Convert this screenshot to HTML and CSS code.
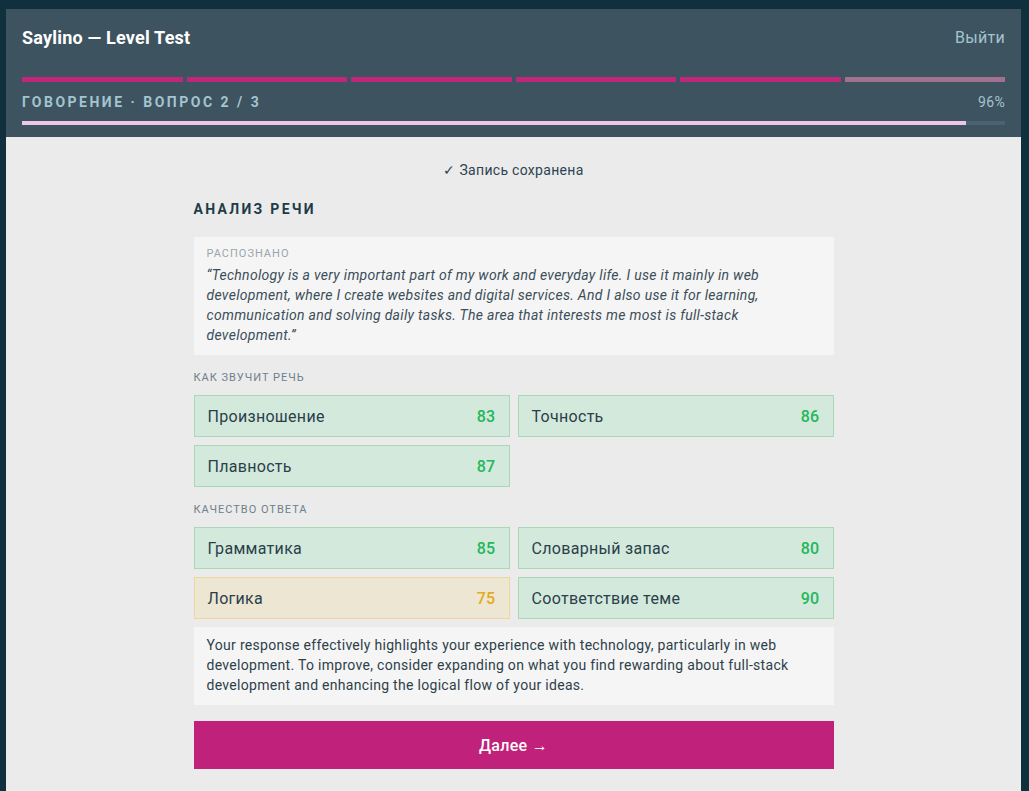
FILE: index.html
```html
<!DOCTYPE html>
<html lang="ru">
<head>
    <meta charset="UTF-8">
    <meta name="viewport" content="width=device-width, initial-scale=1.0">
    <title>Saylino — Level Test</title>
    <link rel="stylesheet" href="styles.css">
</head>
<body>
    <div class="app">
        <header class="topbar">
            <div class="title-row">
                <div class="brand">Saylino — Level Test</div>
                <a class="exit" href="#">Выйти</a>
            </div>

            <div class="segments">
                <span class="seg done"></span>
                <span class="seg done"></span>
                <span class="seg done"></span>
                <span class="seg done"></span>
                <span class="seg done"></span>
                <span class="seg current"></span>
            </div>

            <div class="step-row">
                <span class="step">Говорение · Вопрос 2 / 3</span>
                <span class="percent">96%</span>
            </div>

            <div class="progress">
                <div class="progress-fill" style="width: 96%"></div>
            </div>
        </header>

        <main class="content">
            <div class="saved">✓ Запись сохранена</div>

            <div class="column">
                <h2 class="heading">Анализ речи</h2>

                <div class="transcript">
                    <div class="caption">Распознано</div>
                    <p class="quote">“Technology is a very important part of my work and everyday life. I use it mainly in web development, where I create websites and digital services. And I also use it for learning, communication and solving daily tasks. The area that interests me most is full-stack development.”</p>
                </div>

                <div class="group-label">Как звучит речь</div>
                <div class="scores">
                    <div class="score good"><span>Произношение</span><b>83</b></div>
                    <div class="score good"><span>Точность</span><b>86</b></div>
                    <div class="score good"><span>Плавность</span><b>87</b></div>
                </div>

                <div class="group-label">Качество ответа</div>
                <div class="scores">
                    <div class="score good"><span>Грамматика</span><b>85</b></div>
                    <div class="score good"><span>Словарный запас</span><b>80</b></div>
                    <div class="score fair"><span>Логика</span><b>75</b></div>
                    <div class="score good"><span>Соответствие теме</span><b>90</b></div>
                </div>

                <div class="feedback">Your response effectively highlights your experience with technology, particularly in web development. To improve, consider expanding on what you find rewarding about full-stack development and enhancing the logical flow of your ideas.</div>

                <button class="next-button">Далее →</button>
            </div>
        </main>
    </div>
</body>
</html>
```

FILE: styles.css
```css
body {
    margin: 0;
    font-family: Roboto, 'Noto Sans', sans-serif;
    background: #10303e;
    min-height: 100vh;
}

.app {
    margin: 9px 8px 0 6px;
    background: #ebebeb;
    min-height: calc(100vh - 9px);
}

/* header */

.topbar {
    background: #3e5360;
    padding: 18px 16px 12px;
}

.title-row {
    display: flex;
    justify-content: space-between;
    align-items: center;
    height: 20px;
}

.brand {
    color: #ffffff;
    font-size: 18px;
    font-weight: 700;
    letter-spacing: 0.2px;
}

.exit {
    color: #a4c4cf;
    font-size: 16px;
    letter-spacing: 0.3px;
    text-decoration: none;
}

.segments {
    display: flex;
    gap: 4px;
    margin-top: 30px;
}

.seg {
    flex: 1;
    height: 5px;
    background: #c0267a;
}

.seg.current {
    background: #a07290;
}

.step-row {
    display: flex;
    justify-content: space-between;
    align-items: center;
    margin-top: 10px;
    height: 20px;
}

.step {
    color: #a4c4cf;
    font-size: 14px;
    font-weight: 700;
    letter-spacing: 2.5px;
    text-transform: uppercase;
}

.percent {
    color: #a4c4cf;
    font-size: 14px;
    letter-spacing: 0.3px;
}

.progress {
    margin-top: 9px;
    height: 4px;
    background: #4d6270;
}

.progress-fill {
    height: 100%;
    background: #eec6e6;
}

/* content */

.content {
    padding: 23px 0 22px;
}

.saved {
    text-align: center;
    color: #2e4452;
    font-size: 14px;
    line-height: 20px;
    letter-spacing: 0.3px;
}

.column {
    width: 640px;
    margin: 0 auto;
}

.heading {
    margin: 19px 0 0;
    font-size: 14px;
    line-height: 20px;
    font-weight: 700;
    letter-spacing: 2.3px;
    text-transform: uppercase;
    color: #1f3a48;
}

.transcript {
    margin-top: 18px;
    background: #f5f5f5;
    padding: 10px 13px;
}

.caption {
    font-size: 11px;
    line-height: 14px;
    letter-spacing: 1px;
    text-transform: uppercase;
    color: #9aa6ad;
    margin-bottom: 4px;
}

.quote {
    margin: 0;
    font-size: 14px;
    line-height: 20px;
    font-style: italic;
    letter-spacing: 0.3px;
    color: #3b4e59;
}

.group-label {
    margin-top: 16px;
    font-size: 11px;
    line-height: 14px;
    letter-spacing: 1px;
    text-transform: uppercase;
    color: #6d808b;
}

.scores {
    display: grid;
    grid-template-columns: 1fr 1fr;
    gap: 8px;
    margin-top: 10px;
}

.score {
    display: flex;
    justify-content: space-between;
    align-items: center;
    height: 42px;
    box-sizing: border-box;
    padding: 0 13px;
    font-size: 16px;
    letter-spacing: 0.3px;
    color: #2a3f4a;
}

.score b {
    font-weight: 500;
}

.score.good {
    background: #d3e9dc;
    border: 1px solid #a9d8b7;
}

.score.good b {
    color: #24b75b;
}

.score.fair {
    background: #ede6d3;
    border: 1px solid #f1d69c;
}

.score.fair b {
    color: #e3ab22;
}

.feedback {
    margin-top: 8px;
    background: #f5f5f5;
    padding: 8px 13px 10px;
    font-size: 14px;
    line-height: 20px;
    letter-spacing: 0.3px;
    color: #2e3f4a;
}

.next-button {
    display: block;
    width: 100%;
    height: 48px;
    margin-top: 16px;
    border: none;
    background: #c0217a;
    color: #ffffff;
    font-family: inherit;
    font-size: 16px;
    font-weight: 500;
    letter-spacing: 0.3px;
    cursor: pointer;
}
```
